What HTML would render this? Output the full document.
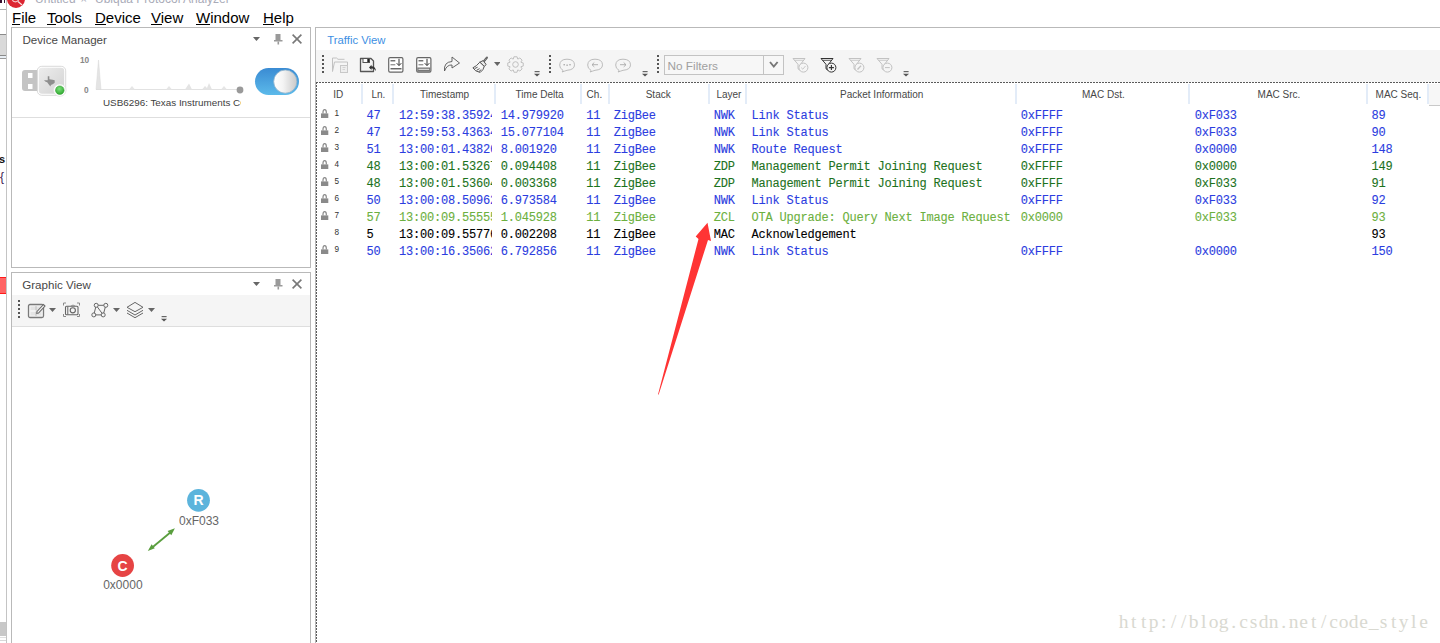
<!DOCTYPE html>
<html><head><meta charset="utf-8"><title>Ubiqua Protocol Analyzer</title>
<style>
html,body{margin:0;padding:0;}
body{width:1440px;height:643px;position:relative;overflow:hidden;background:#fff;font-family:'Liberation Sans',sans-serif;}
.t{position:absolute;line-height:0;white-space:pre;}
.b{position:absolute;}
</style></head><body>
<div class="b" style="left:6px;top:0px;width:1px;height:643px;background:#c4c4c4"></div><div class="b" style="left:0px;top:9px;width:6px;height:1px;background:#b0b0b0"></div><div class="b" style="left:0px;top:0px;width:1.5px;height:3px;background:#3a1030"></div><div class="b" style="left:3.5px;top:0px;width:1.5px;height:3px;background:#3a1030"></div><div class="b" style="left:0px;top:34px;width:6px;height:1px;background:#8a8a8a"></div><div class="b" style="left:0px;top:35px;width:6px;height:20px;background:#d9d9d9"></div><div class="b" style="left:0px;top:55px;width:6px;height:1px;background:#8a8a8a"></div><div class="b" style="left:0px;top:56px;width:6px;height:2px;background:#e8eef4"></div><div class="b" style="left:0px;top:58px;width:6px;height:1px;background:#9a9a9a"></div><div class="t" style="left:-1.00px;top:159.19px;font-family:'Liberation Sans', sans-serif;font-size:11px;color:#111;font-weight:700;">s</div><div class="t" style="left:0.00px;top:176.84px;font-family:'Liberation Sans', sans-serif;font-size:12px;color:#3a2050;font-weight:400;">{</div><div class="b" style="left:0px;top:277px;width:6px;height:17px;background:#ff6464;border-top:1px solid #ff1a1a;border-bottom:1px solid #ff1a1a;box-sizing:border-box"></div><div class="b" style="left:0px;top:622px;width:6px;height:14px;background:#c8c8c8"></div><div class="b" style="left:0px;top:637px;width:6px;height:1px;background:#e0e0e0"></div><div class="b" style="left:0px;top:640px;width:6px;height:1px;background:#d8d8d8"></div><svg class="b" style="left:6px;top:0px;" width="22" height="10" viewBox="0 0 22 10"><circle cx="10" cy="-1" r="9" fill="#dc2430"/><circle cx="9.5" cy="-1.5" r="3.3" fill="none" stroke="#f3c6c8" stroke-width="1.2"/><line x1="12" y1="1.5" x2="16" y2="5" stroke="#f8e0e0" stroke-width="1.3"/></svg><div class="t" style="left:35.00px;top:-1.16px;font-family:'Liberation Sans', sans-serif;font-size:12px;color:#a9abb8;font-weight:400;">Untitled</div><div class="t" style="left:80.50px;top:-0.81px;font-family:'Liberation Sans', sans-serif;font-size:11px;color:#a9abb8;font-weight:400;">×</div><div class="t" style="left:95.00px;top:-1.16px;font-family:'Liberation Sans', sans-serif;font-size:12px;color:#a9abb8;font-weight:400;">Ubiqua Protocol Analyzer</div><div class="t" style="left:12.00px;top:17.50px;font-family:'Liberation Sans', sans-serif;font-size:15px;color:#000;font-weight:400;">File</div><div class="b" style="left:12px;top:24px;width:8px;height:1px;background:#000"></div><div class="t" style="left:47.00px;top:17.50px;font-family:'Liberation Sans', sans-serif;font-size:15px;color:#000;font-weight:400;">Tools</div><div class="b" style="left:47px;top:24px;width:8.5px;height:1px;background:#000"></div><div class="t" style="left:95.00px;top:17.50px;font-family:'Liberation Sans', sans-serif;font-size:15px;color:#000;font-weight:400;">Device</div><div class="b" style="left:95px;top:24px;width:11px;height:1px;background:#000"></div><div class="t" style="left:151.00px;top:17.50px;font-family:'Liberation Sans', sans-serif;font-size:15px;color:#000;font-weight:400;">View</div><div class="b" style="left:151px;top:24px;width:10.5px;height:1px;background:#000"></div><div class="t" style="left:196.00px;top:17.50px;font-family:'Liberation Sans', sans-serif;font-size:15px;color:#000;font-weight:400;">Window</div><div class="b" style="left:196px;top:24px;width:14px;height:1px;background:#000"></div><div class="t" style="left:263.00px;top:17.50px;font-family:'Liberation Sans', sans-serif;font-size:15px;color:#000;font-weight:400;">Help</div><div class="b" style="left:263px;top:24px;width:11px;height:1px;background:#000"></div><div class="b" style="left:11px;top:27px;width:300px;height:241px;border:1px solid #b9b9b9;box-sizing:border-box"></div><div class="t" style="left:22.50px;top:39.98px;font-family:'Liberation Sans', sans-serif;font-size:11.6px;color:#474747;font-weight:400;">Device Manager</div><svg class="b" style="left:250px;top:30px;" width="56" height="18" viewBox="0 0 56 18"><polygon points="3,7 10,7 6.5,11" fill="#666"/><rect x="25.5" y="4" width="5" height="6.5" fill="#9a9a9a"/><rect x="24" y="10" width="8.5" height="1.5" fill="#9a9a9a"/><rect x="27.5" y="11.5" width="1.6" height="3" fill="#9a9a9a"/><path d="M42.6 4.6 L51.4 13.4 M51.4 4.6 L42.6 13.4" stroke="#787878" stroke-width="1.6"/></svg><svg class="b" style="left:20px;top:62px;" width="50" height="38" viewBox="0 0 50 38"><defs><linearGradient id="ub" x1="0" y1="0" x2="1" y2="1"><stop offset="0" stop-color="#ececec"/><stop offset="1" stop-color="#d3d3d3"/></linearGradient><radialGradient id="gd" cx="0.45" cy="0.35" r="0.7"><stop offset="0" stop-color="#7be07b"/><stop offset="1" stop-color="#2aa52a"/></radialGradient></defs><rect x="2" y="8" width="18" height="21" rx="3" fill="#c4c4c4"/><rect x="8" y="11" width="4.5" height="5" fill="#fff"/><rect x="8" y="22" width="4.5" height="5" fill="#fff"/><rect x="17.3" y="4.3" width="28.4" height="29" rx="4.5" fill="#fff" stroke="#d0d0d0" stroke-width="0.8"/><rect x="18.8" y="5.8" width="25.4" height="26" rx="3.3" fill="url(#ub)"/><polygon points="27.75,14.20 29.35,14.20 29.35,17.17 32.56,17.66 34.70,18.16 34.70,20.63 33.09,22.12 30.95,23.11 30.42,24.40 28.82,22.61 27.21,20.14 25.61,19.64 24.00,18.16 27.75,18.16" fill="#8e8e8e"/><circle cx="39.8" cy="28.2" r="6.2" fill="#fff" stroke="#dedede" stroke-width="0.6"/><circle cx="39.8" cy="28.2" r="4.3" fill="url(#gd)" stroke="#2f9a2f" stroke-width="0.5"/></svg><svg class="b" style="left:78px;top:55px;" width="170" height="40" viewBox="0 0 170 40"><line x1="18" y1="34.5" x2="159" y2="34.5" stroke="#e2e2e2" stroke-width="1"/><polygon points="18,34.5 20.5,5 23,34.5" fill="#e4e4e4" stroke="#d8d8d8" stroke-width="0.5"/><polygon points="51,34.5 54,31 57,34.5" fill="#e6e6e6"/><polygon points="88,34.5 91,31 94,34.5" fill="#e6e6e6"/><polygon points="107,34.5 111,28.5 114,34.5" fill="#e4e4e4"/><polygon points="124,34.5 127,31 129,33 131,28 134,34.5" fill="#e4e4e4"/><polygon points="143,34.5 146,31 149,34.5" fill="#e6e6e6"/><circle cx="162" cy="35" r="3.4" fill="#9a9a9a"/></svg><div class="t" style="left:79.90px;top:60.22px;font-family:'Liberation Sans', sans-serif;font-size:8.3px;color:#888;font-weight:700;">10</div><div class="t" style="left:83.90px;top:89.92px;font-family:'Liberation Sans', sans-serif;font-size:8.3px;color:#888;font-weight:700;">0</div><svg class="b" style="left:253px;top:66px;" width="50" height="32" viewBox="0 0 50 32"><defs><linearGradient id="tg" x1="0" y1="0" x2="0" y2="1"><stop offset="0" stop-color="#3a8bd3"/><stop offset="1" stop-color="#5cbaea"/></linearGradient><linearGradient id="kn" x1="0" y1="0" x2="1" y2="0"><stop offset="0" stop-color="#ffffff"/><stop offset="0.4" stop-color="#f4f4f4"/><stop offset="1" stop-color="#c9c9c9"/></linearGradient></defs><rect x="2" y="2" width="44" height="27" rx="13.5" fill="url(#tg)"/><circle cx="32.3" cy="15.6" r="11.6" fill="url(#kn)" stroke="#8fb2cc" stroke-width="0.8"/></svg><div class="b" style="left:103px;top:90px;width:137.5px;height:20px;overflow:hidden"><div class="t" style="left:0.00px;top:12.69px;font-family:'Liberation Sans', sans-serif;font-size:9.85px;color:#404040;font-weight:400;">USB6296: Texas Instruments CC2531</div></div><div class="b" style="left:12px;top:117px;width:298px;height:1px;background:#dedede"></div><div class="b" style="left:11px;top:272px;width:300px;height:380px;border:1px solid #b9b9b9;box-sizing:border-box"></div><div class="t" style="left:22.20px;top:284.78px;font-family:'Liberation Sans', sans-serif;font-size:11.6px;color:#474747;font-weight:400;">Graphic View</div><svg class="b" style="left:250px;top:275px;" width="56" height="18" viewBox="0 0 56 18"><polygon points="3,7 10,7 6.5,11" fill="#666"/><rect x="25.5" y="4" width="5" height="6.5" fill="#9a9a9a"/><rect x="24" y="10" width="8.5" height="1.5" fill="#9a9a9a"/><rect x="27.5" y="11.5" width="1.6" height="3" fill="#9a9a9a"/><path d="M42.6 4.6 L51.4 13.4 M51.4 4.6 L42.6 13.4" stroke="#787878" stroke-width="1.6"/></svg><div class="b" style="left:12px;top:295px;width:298px;height:31px;background:#f5f5f5"></div><div class="b" style="left:12px;top:326px;width:298px;height:1px;background:#dedede"></div><svg class="b" style="left:18px;top:300px;" width="2" height="18" viewBox="0 0 2 18"><rect x="0" y="0" width="2" height="2" fill="#555"/><rect x="0" y="4" width="2" height="2" fill="#555"/><rect x="0" y="8" width="2" height="2" fill="#555"/><rect x="0" y="12" width="2" height="2" fill="#555"/><rect x="0" y="16" width="2" height="2" fill="#555"/></svg><svg class="b" style="left:26px;top:301px;" width="20" height="18" viewBox="0 0 20 18"><rect x="2.5" y="3.5" width="15" height="13" rx="1.5" fill="none" stroke="#7a7a7a" stroke-width="1.3"/><rect x="4.5" y="5.5" width="11" height="9" fill="#e4e4e4"/><line x1="10" y1="5.5" x2="10" y2="14.5" stroke="#8a8a8a" stroke-width="0.8" stroke-dasharray="1,1"/><line x1="4.5" y1="10" x2="10" y2="10" stroke="#fff" stroke-width="1"/><path d="M11 10.5 L17.5 3.5 L19 5 L12.5 12 L10.8 12.4 Z" fill="#f5f5f5" stroke="#6a6a6a" stroke-width="1.1"/></svg><svg class="b" style="left:49.3px;top:308px;" width="7" height="4.6" viewBox="0 0 7 4.6"><polygon points="0,0 7,0 3.5,4.1" fill="#666"/></svg><svg class="b" style="left:62px;top:302px;" width="20" height="16" viewBox="0 0 20 16"><path d="M1.5 3.5 V1 H4 M15 1 H17.5 V3.5 M1.5 12 V14.5 H4 M15 14.5 H17.5 V12" fill="none" stroke="#8a8a8a" stroke-width="1"/><rect x="3.5" y="4.3" width="12.5" height="8.5" rx="1" fill="none" stroke="#666" stroke-width="1.1"/><line x1="5.8" y1="4.5" x2="5.8" y2="12.5" stroke="#666" stroke-width="1"/><path d="M8.5 4.3 Q11 1.8 13.5 4.3" fill="none" stroke="#888" stroke-width="0.9"/><circle cx="10.8" cy="8.3" r="2.6" fill="none" stroke="#666" stroke-width="1.1"/></svg><svg class="b" style="left:90px;top:301px;" width="19" height="18" viewBox="0 0 19 18"><g fill="none" stroke="#666" stroke-width="1"><line x1="6.2" y1="4.3" x2="15.8" y2="4.3"/><line x1="3.8" y1="13.9" x2="13.2" y2="13.9"/><line x1="6.2" y1="4.3" x2="3.8" y2="13.9"/><line x1="15.8" y1="4.3" x2="13.2" y2="13.9"/><line x1="6.2" y1="4.3" x2="13.2" y2="13.9"/><circle cx="6.2" cy="4.3" r="2" fill="#f5f5f5"/><circle cx="15.8" cy="4.3" r="2" fill="#f5f5f5"/><circle cx="3.8" cy="13.9" r="2" fill="#f5f5f5"/><circle cx="13.2" cy="13.9" r="2" fill="#f5f5f5"/></g></svg><svg class="b" style="left:112.8px;top:308px;" width="7" height="4.6" viewBox="0 0 7 4.6"><polygon points="0,0 7,0 3.5,4.1" fill="#666"/></svg><svg class="b" style="left:125px;top:300px;" width="20" height="20" viewBox="0 0 20 20"><g fill="none" stroke="#666" stroke-width="1" stroke-linejoin="round"><path d="M2 13 L10 17.7 L18 13"/><path d="M2 10.3 L10 15 L18 10.3"/><path d="M2 7.3 L10 2.4 L18 7.3 L10 11.7 Z"/></g></svg><svg class="b" style="left:148.1px;top:308px;" width="7" height="4.6" viewBox="0 0 7 4.6"><polygon points="0,0 7,0 3.5,4.1" fill="#666"/></svg><svg class="b" style="left:160.5px;top:315.79999999999995px;" width="7" height="7" viewBox="0 0 7 7"><rect x="0.6" y="0" width="5" height="1.2" fill="#666"/><polygon points="0,2.7 6,2.7 3,5.5" fill="#555"/></svg><svg class="b" style="left:140px;top:520px;" width="45" height="40" viewBox="0 0 45 40"><line x1="11" y1="28.5" x2="31.5" y2="11.5" stroke="#5a9e3e" stroke-width="1.8"/><polygon points="7.8,31 11.6,24.3 14.8,28.2" fill="#5a9e3e"/><polygon points="34.9,8.2 27.6,11.1 31.3,15.2" fill="#5a9e3e"/></svg><svg class="b" style="left:185px;top:487px;" width="28" height="28" viewBox="0 0 28 28"><circle cx="13.5" cy="13.3" r="11.4" fill="#5cb4dc"/><text x="13.5" y="18.3" text-anchor="middle" font-family="Liberation Sans" font-weight="700" font-size="14" fill="#fff">R</text></svg><div class="t" style="left:179.00px;top:520.64px;font-family:'Liberation Sans', sans-serif;font-size:12px;color:#666;font-weight:400;">0xF033</div><svg class="b" style="left:109px;top:552px;" width="28" height="28" viewBox="0 0 28 28"><circle cx="13.6" cy="13.5" r="11.4" fill="#e64444"/><text x="13.6" y="18.6" text-anchor="middle" font-family="Liberation Sans" font-weight="700" font-size="14" fill="#fff">C</text></svg><div class="t" style="left:103.20px;top:585.44px;font-family:'Liberation Sans', sans-serif;font-size:12px;color:#666;font-weight:400;">0x0000</div><div class="b" style="left:315px;top:27px;width:1130px;height:620px;border:1px solid #b9b9b9;box-sizing:border-box"></div><div class="t" style="left:327.30px;top:39.88px;font-family:'Liberation Sans', sans-serif;font-size:11.3px;color:#3d8fe3;font-weight:400;">Traffic View</div><div class="b" style="left:316px;top:50px;width:1124px;height:32px;background:#f5f5f5"></div><svg class="b" style="left:322px;top:55px;" width="2" height="18" viewBox="0 0 2 18"><rect x="0" y="0" width="2" height="2" fill="#555"/><rect x="0" y="4" width="2" height="2" fill="#555"/><rect x="0" y="8" width="2" height="2" fill="#555"/><rect x="0" y="12" width="2" height="2" fill="#555"/><rect x="0" y="16" width="2" height="2" fill="#555"/></svg><svg class="b" style="left:330px;top:56px;" width="20" height="18" viewBox="0 0 20 18"><g fill="none" stroke="#c2c2c2" stroke-width="1"><path d="M2.5 15.5 V2 H6.5 L8 3.3 H14.5"/><path d="M2.5 15.5 L4.5 6 H17.5 V9"/></g><rect x="10.5" y="9.5" width="7" height="7" fill="#eee" stroke="#c8c8c8" stroke-width="1"/><path d="M12.5 11.5 H15.5 M12.5 13.5 H15" stroke="#ccc" stroke-width="0.8"/></svg><svg class="b" style="left:358px;top:56px;" width="20" height="18" viewBox="0 0 20 18"><path d="M2.5 2.5 H13 L15.5 5 V15.5 H2.5 Z" fill="none" stroke="#555" stroke-width="1.3" stroke-linejoin="round"/><rect x="5" y="2.5" width="6.5" height="4" fill="#fff" stroke="#555" stroke-width="1"/><rect x="9.3" y="3" width="1.8" height="3" fill="#222"/><path d="M11 11.5 L13.5 8.8 L13.5 10.2 Q17.5 10.2 18 15 Q16 12.3 13.5 12.6 L13.5 14 Z" fill="#333"/></svg><svg class="b" style="left:386.5px;top:55.5px;" width="18" height="18" viewBox="0 0 18 18"><rect x="1.7" y="1.7" width="14.2" height="14.4" rx="1.3" fill="#fff" stroke="#666" stroke-width="1.2"/><line x1="3.5" y1="4.8" x2="8.3" y2="4.8" stroke="#444" stroke-width="1.1"/><line x1="3.5" y1="8.7" x2="8.3" y2="8.7" stroke="#999" stroke-width="1.4"/><path d="M12 2.8 V9.3 M9.7 7.2 L12 9.6 L14.3 7.2" fill="none" stroke="#333" stroke-width="1"/><line x1="3.5" y1="12.8" x2="14.5" y2="12.8" stroke="#333" stroke-width="1.1"/></svg><svg class="b" style="left:414.5px;top:55.5px;" width="18" height="18" viewBox="0 0 18 18"><rect x="1.7" y="1.7" width="14.2" height="14.4" rx="1.3" fill="#fff" stroke="#666" stroke-width="1.2"/><line x1="3.5" y1="4.8" x2="8.3" y2="4.8" stroke="#444" stroke-width="1.1"/><line x1="3.5" y1="8.7" x2="8.3" y2="8.7" stroke="#999" stroke-width="1.4"/><path d="M12 2.8 V9.3 M9.7 7.2 L12 9.6 L14.3 7.2" fill="none" stroke="#333" stroke-width="1"/><rect x="2.3" y="11.5" width="13" height="4.2" fill="#777"/><line x1="3.5" y1="13.3" x2="14.2" y2="13.3" stroke="#fff" stroke-width="0.9"/></svg><svg class="b" style="left:442px;top:54.2px;" width="20" height="19" viewBox="0 0 20 19"><path d="M2.5 17 Q1.5 8 10 7.5 V3 L17.5 9 L10 14 V11 Q5 10.5 2.5 17 Z" fill="none" stroke="#555" stroke-width="0.9" stroke-linejoin="round"/></svg><svg class="b" style="left:471px;top:55px;" width="18" height="19" viewBox="0 0 18 19"><path d="M15.9 2.6 L12.6 6.6" stroke="#555" stroke-width="2.2" stroke-linecap="round"/><path d="M15.9 2.6 L12.6 6.6" stroke="#ddd" stroke-width="0.7" stroke-dasharray="1,1"/><polygon points="8.8,7.2 12.2,5.6 15.2,9.6 13.2,11.4" fill="#e8e8e8" stroke="#555" stroke-width="1"/><path d="M8.8 7.2 Q5.5 11.3 1.9 12.8 Q4 16.6 9.2 17.4 Q12.6 15 13.2 11.4 Z" fill="#f7f7f7" stroke="#555" stroke-width="1"/><path d="M3.6 13.6 L6.6 12.2 M5.6 15.3 L8.6 13.6 M7.8 16.6 L10.3 14.6" stroke="#444" stroke-width="0.9"/></svg><svg class="b" style="left:493.7px;top:62.4px;" width="6.5" height="4.6" viewBox="0 0 6.5 4.6"><polygon points="0,0 6.5,0 3.25,4.1" fill="#666"/></svg><svg class="b" style="left:506.5px;top:56.3px;" width="17" height="17" viewBox="0 0 17 17"><polygon points="16.24,6.93 16.24,10.07 14.02,10.58 13.87,10.93 15.08,12.86 12.86,15.08 10.93,13.87 10.58,14.02 10.07,16.24 6.93,16.24 6.42,14.02 6.07,13.87 4.14,15.08 1.92,12.86 3.13,10.93 2.98,10.58 0.76,10.07 0.76,6.93 2.98,6.42 3.13,6.07 1.92,4.14 4.14,1.92 6.07,3.13 6.42,2.98 6.93,0.76 10.07,0.76 10.58,2.98 10.93,3.13 12.86,1.92 15.08,4.14 13.87,6.07 14.02,6.42" fill="none" stroke="#c0c0c0" stroke-width="1"/><circle cx="8.5" cy="8.5" r="2.8" fill="none" stroke="#c0c0c0" stroke-width="1"/></svg><svg class="b" style="left:533.6px;top:70.80000000000001px;" width="7" height="7" viewBox="0 0 7 7"><rect x="0.6" y="0" width="5" height="1.2" fill="#666"/><polygon points="0,2.7 6,2.7 3,5.5" fill="#555"/></svg><svg class="b" style="left:549px;top:55px;" width="2" height="18" viewBox="0 0 2 18"><rect x="0" y="0" width="2" height="2" fill="#555"/><rect x="0" y="4" width="2" height="2" fill="#555"/><rect x="0" y="8" width="2" height="2" fill="#555"/><rect x="0" y="12" width="2" height="2" fill="#555"/><rect x="0" y="16" width="2" height="2" fill="#555"/></svg><svg class="b" style="left:558.7px;top:57.5px;" width="17" height="15" viewBox="0 0 17 15"><path d="M4 12.3 Q0.5 10.5 0.7 7 Q1 1.2 8 1.2 Q15.3 1.2 15.5 6.8 Q15.5 11.8 8 12.3 Q6 13 3 14 Q4 13 4 12.3 Z" fill="none" stroke="#b5b5b5" stroke-width="0.9"/><rect x="4.5" y="6" width="1.4" height="1.4" fill="#aaa"/><rect x="7.4" y="6.5" width="1.4" height="1.4" fill="#aaa"/><rect x="10.3" y="6" width="1.4" height="1.4" fill="#aaa"/></svg><svg class="b" style="left:586.6px;top:57.5px;" width="17" height="15" viewBox="0 0 17 15"><path d="M4 12.3 Q0.5 10.5 0.7 7 Q1 1.2 8 1.2 Q15.3 1.2 15.5 6.8 Q15.5 11.8 8 12.3 Q6 13 3 14 Q4 13 4 12.3 Z" fill="none" stroke="#b5b5b5" stroke-width="0.9"/><path d="M5 6.7 H11 M7.3 4.5 L5 6.7 L7.3 8.9" fill="none" stroke="#aaa" stroke-width="0.9"/></svg><svg class="b" style="left:614.5px;top:57.5px;" width="17" height="15" viewBox="0 0 17 15"><path d="M4 12.3 Q0.5 10.5 0.7 7 Q1 1.2 8 1.2 Q15.3 1.2 15.5 6.8 Q15.5 11.8 8 12.3 Q6 13 3 14 Q4 13 4 12.3 Z" fill="none" stroke="#b5b5b5" stroke-width="0.9"/><path d="M5 6.7 H11 M8.7 4.5 L11 6.7 L8.7 8.9" fill="none" stroke="#aaa" stroke-width="0.9"/></svg><svg class="b" style="left:641.9px;top:70.80000000000001px;" width="7" height="7" viewBox="0 0 7 7"><rect x="0.6" y="0" width="5" height="1.2" fill="#666"/><polygon points="0,2.7 6,2.7 3,5.5" fill="#555"/></svg><svg class="b" style="left:657px;top:55px;" width="2" height="18" viewBox="0 0 2 18"><rect x="0" y="0" width="2" height="2" fill="#555"/><rect x="0" y="4" width="2" height="2" fill="#555"/><rect x="0" y="8" width="2" height="2" fill="#555"/><rect x="0" y="12" width="2" height="2" fill="#555"/><rect x="0" y="16" width="2" height="2" fill="#555"/></svg><div class="b" style="left:664px;top:55px;width:120px;height:20px;border:1px solid #c3c3c3;box-sizing:border-box;background:#f7f7f7"></div><div class="b" style="left:763px;top:56px;width:1px;height:18px;background:#c3c3c3"></div><svg class="b" style="left:768px;top:59px;" width="12" height="11" viewBox="0 0 12 11"><path d="M2 3 L5.8 7.5 L9.6 3" fill="none" stroke="#777" stroke-width="1.9"/></svg><div class="t" style="left:667.50px;top:65.91px;font-family:'Liberation Sans', sans-serif;font-size:11.8px;color:#a0a0a0;font-weight:400;">No Filters</div><svg class="b" style="left:792.2px;top:56.8px;" width="17" height="17" viewBox="0 0 17 17"><path d="M1 1.5 H13 L8.5 7.3 V13.5 L6 11.8 V7.3 Z" fill="none" stroke="#c2c2c2" stroke-width="1"/><line x1="2.5" y1="3.3" x2="11.5" y2="3.3" stroke="#c2c2c2" stroke-width="0.8"/><circle cx="11.4" cy="10.6" r="4.5" fill="#f5f5f5" stroke="#c2c2c2" stroke-width="1"/><path d="M9.2 10.6 L10.8 12.2 L13.5 9" fill="none" stroke="#c2c2c2" stroke-width="0.9"/></svg><svg class="b" style="left:820.3px;top:56.8px;" width="17" height="17" viewBox="0 0 17 17"><path d="M1 1.5 H13 L8.5 7.3 V13.5 L6 11.8 V7.3 Z" fill="none" stroke="#333" stroke-width="1"/><line x1="2.5" y1="3.3" x2="11.5" y2="3.3" stroke="#333" stroke-width="0.8"/><circle cx="11.4" cy="10.6" r="4.5" fill="#f5f5f5" stroke="#333" stroke-width="1"/><path d="M8.9 10.6 H13.9 M11.4 8.1 V13.1" stroke="#333" stroke-width="1.1"/></svg><svg class="b" style="left:848.3px;top:56.8px;" width="17" height="17" viewBox="0 0 17 17"><path d="M1 1.5 H13 L8.5 7.3 V13.5 L6 11.8 V7.3 Z" fill="none" stroke="#c2c2c2" stroke-width="1"/><line x1="2.5" y1="3.3" x2="11.5" y2="3.3" stroke="#c2c2c2" stroke-width="0.8"/><circle cx="11.4" cy="10.6" r="4.5" fill="#f5f5f5" stroke="#c2c2c2" stroke-width="1"/><path d="M9.5 12.5 L13 8.8" stroke="#c2c2c2" stroke-width="1.3"/></svg><svg class="b" style="left:876.3px;top:56.8px;" width="17" height="17" viewBox="0 0 17 17"><path d="M1 1.5 H13 L8.5 7.3 V13.5 L6 11.8 V7.3 Z" fill="none" stroke="#c2c2c2" stroke-width="1"/><line x1="2.5" y1="3.3" x2="11.5" y2="3.3" stroke="#c2c2c2" stroke-width="0.8"/><circle cx="11.4" cy="10.6" r="4.5" fill="#f5f5f5" stroke="#c2c2c2" stroke-width="1"/><path d="M9 10.6 H13.8" stroke="#c2c2c2" stroke-width="1"/></svg><svg class="b" style="left:903.2px;top:70.80000000000001px;" width="7" height="7" viewBox="0 0 7 7"><rect x="0.6" y="0" width="5" height="1.2" fill="#666"/><polygon points="0,2.7 6,2.7 3,5.5" fill="#555"/></svg><div class="b" style="left:316px;top:82px;width:1124px;height:1px;background-image:linear-gradient(to right,#5a5a5a 2px,transparent 2px);background-size:3px 1px"></div><div class="b" style="left:316px;top:82px;width:1px;height:570px;background-image:linear-gradient(to bottom,#5a5a5a 2px,transparent 2px);background-size:1px 3px"></div><div class="b" style="left:360.5px;top:84px;width:2px;height:20px;background:#e3ecf8"></div><div class="b" style="left:392.3px;top:84px;width:2px;height:20px;background:#e3ecf8"></div><div class="b" style="left:494.3px;top:84px;width:2px;height:20px;background:#e3ecf8"></div><div class="b" style="left:579.5px;top:84px;width:2px;height:20px;background:#e3ecf8"></div><div class="b" style="left:607.6px;top:84px;width:2px;height:20px;background:#e3ecf8"></div><div class="b" style="left:707.8px;top:84px;width:2px;height:20px;background:#e3ecf8"></div><div class="b" style="left:745.3px;top:84px;width:2px;height:20px;background:#e3ecf8"></div><div class="b" style="left:1014.5px;top:84px;width:2px;height:20px;background:#e3ecf8"></div><div class="b" style="left:1188.3px;top:84px;width:2px;height:20px;background:#e3ecf8"></div><div class="b" style="left:1365.5px;top:84px;width:2px;height:20px;background:#e3ecf8"></div><div class="b" style="left:1427.3px;top:84px;width:2px;height:20px;background:#e3ecf8"></div><div class="b" style="left:1429px;top:84px;width:11px;height:21px;background:#f7f7f7"></div><div class="b" style="left:1429px;top:105px;width:11px;height:1px;background:#c9c9c9"></div><div class="t" style="left:333.20px;top:94.73px;font-family:'Liberation Sans', sans-serif;font-size:10px;color:#474747;font-weight:400;">ID</div><div class="t" style="left:371.50px;top:94.73px;font-family:'Liberation Sans', sans-serif;font-size:10px;color:#474747;font-weight:400;">Ln.</div><div class="t" style="left:420.00px;top:94.73px;font-family:'Liberation Sans', sans-serif;font-size:10px;color:#474747;font-weight:400;">Timestamp</div><div class="t" style="left:515.60px;top:94.73px;font-family:'Liberation Sans', sans-serif;font-size:10px;color:#474747;font-weight:400;">Time Delta</div><div class="t" style="left:586.60px;top:94.73px;font-family:'Liberation Sans', sans-serif;font-size:10px;color:#474747;font-weight:400;">Ch.</div><div class="t" style="left:645.70px;top:94.73px;font-family:'Liberation Sans', sans-serif;font-size:10px;color:#474747;font-weight:400;">Stack</div><div class="t" style="left:716.40px;top:94.73px;font-family:'Liberation Sans', sans-serif;font-size:10px;color:#474747;font-weight:400;">Layer</div><div class="t" style="left:840.00px;top:94.73px;font-family:'Liberation Sans', sans-serif;font-size:10px;color:#474747;font-weight:400;">Packet Information</div><div class="t" style="left:1082.00px;top:94.73px;font-family:'Liberation Sans', sans-serif;font-size:10px;color:#474747;font-weight:400;">MAC Dst.</div><div class="t" style="left:1257.60px;top:94.73px;font-family:'Liberation Sans', sans-serif;font-size:10px;color:#474747;font-weight:400;">MAC Src.</div><div class="t" style="left:1375.60px;top:94.73px;font-family:'Liberation Sans', sans-serif;font-size:10px;color:#474747;font-weight:400;">MAC Seq.</div><svg class="b" style="left:320px;top:109px;" width="10" height="10" viewBox="0 0 10 10"><path d="M3 4.6 V3.2 Q3 0.7 4.65 0.7 Q6.3 0.7 6.3 3.2 V4.6" fill="none" stroke="#8a8a8a" stroke-width="1.2"/><rect x="1" y="4.4" width="7.3" height="4.6" fill="#8a8a8a"/></svg><div class="t" style="left:334.60px;top:113.96px;font-family:'Liberation Sans', sans-serif;font-size:8.2px;color:#333;font-weight:400;">1</div><div class="t" style="left:366.50px;top:115.81px;font-family:'Liberation Mono', monospace;font-size:12.0px;color:#2b3de0;font-weight:400;letter-spacing:-0.2px;-webkit-text-stroke:0.1px currentColor;">47</div><div class="b" style="left:398px;top:105px;width:94px;height:18px;overflow:hidden"><div class="t" style="left:1.00px;top:10.81px;font-family:'Liberation Mono', monospace;font-size:12.0px;color:#2b3de0;font-weight:400;letter-spacing:-0.2px;-webkit-text-stroke:0.1px currentColor;">12:59:38.359244</div></div><div class="t" style="left:500.80px;top:115.81px;font-family:'Liberation Mono', monospace;font-size:12.0px;color:#2b3de0;font-weight:400;letter-spacing:-0.2px;-webkit-text-stroke:0.1px currentColor;">14.979920</div><div class="t" style="left:586.30px;top:115.81px;font-family:'Liberation Mono', monospace;font-size:12.0px;color:#2b3de0;font-weight:400;letter-spacing:-0.2px;-webkit-text-stroke:0.1px currentColor;">11</div><div class="t" style="left:613.80px;top:115.81px;font-family:'Liberation Mono', monospace;font-size:12.0px;color:#2b3de0;font-weight:400;letter-spacing:-0.2px;-webkit-text-stroke:0.1px currentColor;">ZigBee</div><div class="t" style="left:713.80px;top:115.81px;font-family:'Liberation Mono', monospace;font-size:12.0px;color:#2b3de0;font-weight:400;letter-spacing:-0.2px;-webkit-text-stroke:0.1px currentColor;">NWK</div><div class="t" style="left:751.50px;top:115.81px;font-family:'Liberation Mono', monospace;font-size:12.0px;color:#2b3de0;font-weight:400;letter-spacing:-0.2px;-webkit-text-stroke:0.1px currentColor;">Link Status</div><div class="t" style="left:1020.80px;top:115.81px;font-family:'Liberation Mono', monospace;font-size:12.0px;color:#2b3de0;font-weight:400;letter-spacing:-0.2px;-webkit-text-stroke:0.1px currentColor;">0xFFFF</div><div class="t" style="left:1194.80px;top:115.81px;font-family:'Liberation Mono', monospace;font-size:12.0px;color:#2b3de0;font-weight:400;letter-spacing:-0.2px;-webkit-text-stroke:0.1px currentColor;">0xF033</div><div class="t" style="left:1371.50px;top:115.81px;font-family:'Liberation Mono', monospace;font-size:12.0px;color:#2b3de0;font-weight:400;letter-spacing:-0.2px;-webkit-text-stroke:0.1px currentColor;">89</div><svg class="b" style="left:320px;top:126px;" width="10" height="10" viewBox="0 0 10 10"><path d="M3 4.6 V3.2 Q3 0.7 4.65 0.7 Q6.3 0.7 6.3 3.2 V4.6" fill="none" stroke="#8a8a8a" stroke-width="1.2"/><rect x="1" y="4.4" width="7.3" height="4.6" fill="#8a8a8a"/></svg><div class="t" style="left:334.60px;top:130.96px;font-family:'Liberation Sans', sans-serif;font-size:8.2px;color:#333;font-weight:400;">2</div><div class="t" style="left:366.50px;top:132.81px;font-family:'Liberation Mono', monospace;font-size:12.0px;color:#2b3de0;font-weight:400;letter-spacing:-0.2px;-webkit-text-stroke:0.1px currentColor;">47</div><div class="b" style="left:398px;top:122px;width:94px;height:18px;overflow:hidden"><div class="t" style="left:1.00px;top:10.81px;font-family:'Liberation Mono', monospace;font-size:12.0px;color:#2b3de0;font-weight:400;letter-spacing:-0.2px;-webkit-text-stroke:0.1px currentColor;">12:59:53.436348</div></div><div class="t" style="left:500.80px;top:132.81px;font-family:'Liberation Mono', monospace;font-size:12.0px;color:#2b3de0;font-weight:400;letter-spacing:-0.2px;-webkit-text-stroke:0.1px currentColor;">15.077104</div><div class="t" style="left:586.30px;top:132.81px;font-family:'Liberation Mono', monospace;font-size:12.0px;color:#2b3de0;font-weight:400;letter-spacing:-0.2px;-webkit-text-stroke:0.1px currentColor;">11</div><div class="t" style="left:613.80px;top:132.81px;font-family:'Liberation Mono', monospace;font-size:12.0px;color:#2b3de0;font-weight:400;letter-spacing:-0.2px;-webkit-text-stroke:0.1px currentColor;">ZigBee</div><div class="t" style="left:713.80px;top:132.81px;font-family:'Liberation Mono', monospace;font-size:12.0px;color:#2b3de0;font-weight:400;letter-spacing:-0.2px;-webkit-text-stroke:0.1px currentColor;">NWK</div><div class="t" style="left:751.50px;top:132.81px;font-family:'Liberation Mono', monospace;font-size:12.0px;color:#2b3de0;font-weight:400;letter-spacing:-0.2px;-webkit-text-stroke:0.1px currentColor;">Link Status</div><div class="t" style="left:1020.80px;top:132.81px;font-family:'Liberation Mono', monospace;font-size:12.0px;color:#2b3de0;font-weight:400;letter-spacing:-0.2px;-webkit-text-stroke:0.1px currentColor;">0xFFFF</div><div class="t" style="left:1194.80px;top:132.81px;font-family:'Liberation Mono', monospace;font-size:12.0px;color:#2b3de0;font-weight:400;letter-spacing:-0.2px;-webkit-text-stroke:0.1px currentColor;">0xF033</div><div class="t" style="left:1371.50px;top:132.81px;font-family:'Liberation Mono', monospace;font-size:12.0px;color:#2b3de0;font-weight:400;letter-spacing:-0.2px;-webkit-text-stroke:0.1px currentColor;">90</div><svg class="b" style="left:320px;top:143px;" width="10" height="10" viewBox="0 0 10 10"><path d="M3 4.6 V3.2 Q3 0.7 4.65 0.7 Q6.3 0.7 6.3 3.2 V4.6" fill="none" stroke="#8a8a8a" stroke-width="1.2"/><rect x="1" y="4.4" width="7.3" height="4.6" fill="#8a8a8a"/></svg><div class="t" style="left:334.60px;top:147.96px;font-family:'Liberation Sans', sans-serif;font-size:8.2px;color:#333;font-weight:400;">3</div><div class="t" style="left:366.50px;top:149.81px;font-family:'Liberation Mono', monospace;font-size:12.0px;color:#2b3de0;font-weight:400;letter-spacing:-0.2px;-webkit-text-stroke:0.1px currentColor;">51</div><div class="b" style="left:398px;top:139px;width:94px;height:18px;overflow:hidden"><div class="t" style="left:1.00px;top:10.81px;font-family:'Liberation Mono', monospace;font-size:12.0px;color:#2b3de0;font-weight:400;letter-spacing:-0.2px;-webkit-text-stroke:0.1px currentColor;">13:00:01.438268</div></div><div class="t" style="left:500.80px;top:149.81px;font-family:'Liberation Mono', monospace;font-size:12.0px;color:#2b3de0;font-weight:400;letter-spacing:-0.2px;-webkit-text-stroke:0.1px currentColor;">8.001920</div><div class="t" style="left:586.30px;top:149.81px;font-family:'Liberation Mono', monospace;font-size:12.0px;color:#2b3de0;font-weight:400;letter-spacing:-0.2px;-webkit-text-stroke:0.1px currentColor;">11</div><div class="t" style="left:613.80px;top:149.81px;font-family:'Liberation Mono', monospace;font-size:12.0px;color:#2b3de0;font-weight:400;letter-spacing:-0.2px;-webkit-text-stroke:0.1px currentColor;">ZigBee</div><div class="t" style="left:713.80px;top:149.81px;font-family:'Liberation Mono', monospace;font-size:12.0px;color:#2b3de0;font-weight:400;letter-spacing:-0.2px;-webkit-text-stroke:0.1px currentColor;">NWK</div><div class="t" style="left:751.50px;top:149.81px;font-family:'Liberation Mono', monospace;font-size:12.0px;color:#2b3de0;font-weight:400;letter-spacing:-0.2px;-webkit-text-stroke:0.1px currentColor;">Route Request</div><div class="t" style="left:1020.80px;top:149.81px;font-family:'Liberation Mono', monospace;font-size:12.0px;color:#2b3de0;font-weight:400;letter-spacing:-0.2px;-webkit-text-stroke:0.1px currentColor;">0xFFFF</div><div class="t" style="left:1194.80px;top:149.81px;font-family:'Liberation Mono', monospace;font-size:12.0px;color:#2b3de0;font-weight:400;letter-spacing:-0.2px;-webkit-text-stroke:0.1px currentColor;">0x0000</div><div class="t" style="left:1371.50px;top:149.81px;font-family:'Liberation Mono', monospace;font-size:12.0px;color:#2b3de0;font-weight:400;letter-spacing:-0.2px;-webkit-text-stroke:0.1px currentColor;">148</div><svg class="b" style="left:320px;top:160px;" width="10" height="10" viewBox="0 0 10 10"><path d="M3 4.6 V3.2 Q3 0.7 4.65 0.7 Q6.3 0.7 6.3 3.2 V4.6" fill="none" stroke="#8a8a8a" stroke-width="1.2"/><rect x="1" y="4.4" width="7.3" height="4.6" fill="#8a8a8a"/></svg><div class="t" style="left:334.60px;top:164.96px;font-family:'Liberation Sans', sans-serif;font-size:8.2px;color:#333;font-weight:400;">4</div><div class="t" style="left:366.50px;top:166.81px;font-family:'Liberation Mono', monospace;font-size:12.0px;color:#1c721c;font-weight:400;letter-spacing:-0.2px;-webkit-text-stroke:0.1px currentColor;">48</div><div class="b" style="left:398px;top:156px;width:94px;height:18px;overflow:hidden"><div class="t" style="left:1.00px;top:10.81px;font-family:'Liberation Mono', monospace;font-size:12.0px;color:#1c721c;font-weight:400;letter-spacing:-0.2px;-webkit-text-stroke:0.1px currentColor;">13:00:01.532676</div></div><div class="t" style="left:500.80px;top:166.81px;font-family:'Liberation Mono', monospace;font-size:12.0px;color:#1c721c;font-weight:400;letter-spacing:-0.2px;-webkit-text-stroke:0.1px currentColor;">0.094408</div><div class="t" style="left:586.30px;top:166.81px;font-family:'Liberation Mono', monospace;font-size:12.0px;color:#1c721c;font-weight:400;letter-spacing:-0.2px;-webkit-text-stroke:0.1px currentColor;">11</div><div class="t" style="left:613.80px;top:166.81px;font-family:'Liberation Mono', monospace;font-size:12.0px;color:#1c721c;font-weight:400;letter-spacing:-0.2px;-webkit-text-stroke:0.1px currentColor;">ZigBee</div><div class="t" style="left:713.80px;top:166.81px;font-family:'Liberation Mono', monospace;font-size:12.0px;color:#1c721c;font-weight:400;letter-spacing:-0.2px;-webkit-text-stroke:0.1px currentColor;">ZDP</div><div class="t" style="left:751.50px;top:166.81px;font-family:'Liberation Mono', monospace;font-size:12.0px;color:#1c721c;font-weight:400;letter-spacing:-0.2px;-webkit-text-stroke:0.1px currentColor;">Management Permit Joining Request</div><div class="t" style="left:1020.80px;top:166.81px;font-family:'Liberation Mono', monospace;font-size:12.0px;color:#1c721c;font-weight:400;letter-spacing:-0.2px;-webkit-text-stroke:0.1px currentColor;">0xFFFF</div><div class="t" style="left:1194.80px;top:166.81px;font-family:'Liberation Mono', monospace;font-size:12.0px;color:#1c721c;font-weight:400;letter-spacing:-0.2px;-webkit-text-stroke:0.1px currentColor;">0x0000</div><div class="t" style="left:1371.50px;top:166.81px;font-family:'Liberation Mono', monospace;font-size:12.0px;color:#1c721c;font-weight:400;letter-spacing:-0.2px;-webkit-text-stroke:0.1px currentColor;">149</div><svg class="b" style="left:320px;top:177px;" width="10" height="10" viewBox="0 0 10 10"><path d="M3 4.6 V3.2 Q3 0.7 4.65 0.7 Q6.3 0.7 6.3 3.2 V4.6" fill="none" stroke="#8a8a8a" stroke-width="1.2"/><rect x="1" y="4.4" width="7.3" height="4.6" fill="#8a8a8a"/></svg><div class="t" style="left:334.60px;top:181.96px;font-family:'Liberation Sans', sans-serif;font-size:8.2px;color:#333;font-weight:400;">5</div><div class="t" style="left:366.50px;top:183.81px;font-family:'Liberation Mono', monospace;font-size:12.0px;color:#1c721c;font-weight:400;letter-spacing:-0.2px;-webkit-text-stroke:0.1px currentColor;">48</div><div class="b" style="left:398px;top:173px;width:94px;height:18px;overflow:hidden"><div class="t" style="left:1.00px;top:10.81px;font-family:'Liberation Mono', monospace;font-size:12.0px;color:#1c721c;font-weight:400;letter-spacing:-0.2px;-webkit-text-stroke:0.1px currentColor;">13:00:01.536044</div></div><div class="t" style="left:500.80px;top:183.81px;font-family:'Liberation Mono', monospace;font-size:12.0px;color:#1c721c;font-weight:400;letter-spacing:-0.2px;-webkit-text-stroke:0.1px currentColor;">0.003368</div><div class="t" style="left:586.30px;top:183.81px;font-family:'Liberation Mono', monospace;font-size:12.0px;color:#1c721c;font-weight:400;letter-spacing:-0.2px;-webkit-text-stroke:0.1px currentColor;">11</div><div class="t" style="left:613.80px;top:183.81px;font-family:'Liberation Mono', monospace;font-size:12.0px;color:#1c721c;font-weight:400;letter-spacing:-0.2px;-webkit-text-stroke:0.1px currentColor;">ZigBee</div><div class="t" style="left:713.80px;top:183.81px;font-family:'Liberation Mono', monospace;font-size:12.0px;color:#1c721c;font-weight:400;letter-spacing:-0.2px;-webkit-text-stroke:0.1px currentColor;">ZDP</div><div class="t" style="left:751.50px;top:183.81px;font-family:'Liberation Mono', monospace;font-size:12.0px;color:#1c721c;font-weight:400;letter-spacing:-0.2px;-webkit-text-stroke:0.1px currentColor;">Management Permit Joining Request</div><div class="t" style="left:1020.80px;top:183.81px;font-family:'Liberation Mono', monospace;font-size:12.0px;color:#1c721c;font-weight:400;letter-spacing:-0.2px;-webkit-text-stroke:0.1px currentColor;">0xFFFF</div><div class="t" style="left:1194.80px;top:183.81px;font-family:'Liberation Mono', monospace;font-size:12.0px;color:#1c721c;font-weight:400;letter-spacing:-0.2px;-webkit-text-stroke:0.1px currentColor;">0xF033</div><div class="t" style="left:1371.50px;top:183.81px;font-family:'Liberation Mono', monospace;font-size:12.0px;color:#1c721c;font-weight:400;letter-spacing:-0.2px;-webkit-text-stroke:0.1px currentColor;">91</div><svg class="b" style="left:320px;top:194px;" width="10" height="10" viewBox="0 0 10 10"><path d="M3 4.6 V3.2 Q3 0.7 4.65 0.7 Q6.3 0.7 6.3 3.2 V4.6" fill="none" stroke="#8a8a8a" stroke-width="1.2"/><rect x="1" y="4.4" width="7.3" height="4.6" fill="#8a8a8a"/></svg><div class="t" style="left:334.60px;top:198.96px;font-family:'Liberation Sans', sans-serif;font-size:8.2px;color:#333;font-weight:400;">6</div><div class="t" style="left:366.50px;top:200.81px;font-family:'Liberation Mono', monospace;font-size:12.0px;color:#2b3de0;font-weight:400;letter-spacing:-0.2px;-webkit-text-stroke:0.1px currentColor;">50</div><div class="b" style="left:398px;top:190px;width:94px;height:18px;overflow:hidden"><div class="t" style="left:1.00px;top:10.81px;font-family:'Liberation Mono', monospace;font-size:12.0px;color:#2b3de0;font-weight:400;letter-spacing:-0.2px;-webkit-text-stroke:0.1px currentColor;">13:00:08.509628</div></div><div class="t" style="left:500.80px;top:200.81px;font-family:'Liberation Mono', monospace;font-size:12.0px;color:#2b3de0;font-weight:400;letter-spacing:-0.2px;-webkit-text-stroke:0.1px currentColor;">6.973584</div><div class="t" style="left:586.30px;top:200.81px;font-family:'Liberation Mono', monospace;font-size:12.0px;color:#2b3de0;font-weight:400;letter-spacing:-0.2px;-webkit-text-stroke:0.1px currentColor;">11</div><div class="t" style="left:613.80px;top:200.81px;font-family:'Liberation Mono', monospace;font-size:12.0px;color:#2b3de0;font-weight:400;letter-spacing:-0.2px;-webkit-text-stroke:0.1px currentColor;">ZigBee</div><div class="t" style="left:713.80px;top:200.81px;font-family:'Liberation Mono', monospace;font-size:12.0px;color:#2b3de0;font-weight:400;letter-spacing:-0.2px;-webkit-text-stroke:0.1px currentColor;">NWK</div><div class="t" style="left:751.50px;top:200.81px;font-family:'Liberation Mono', monospace;font-size:12.0px;color:#2b3de0;font-weight:400;letter-spacing:-0.2px;-webkit-text-stroke:0.1px currentColor;">Link Status</div><div class="t" style="left:1020.80px;top:200.81px;font-family:'Liberation Mono', monospace;font-size:12.0px;color:#2b3de0;font-weight:400;letter-spacing:-0.2px;-webkit-text-stroke:0.1px currentColor;">0xFFFF</div><div class="t" style="left:1194.80px;top:200.81px;font-family:'Liberation Mono', monospace;font-size:12.0px;color:#2b3de0;font-weight:400;letter-spacing:-0.2px;-webkit-text-stroke:0.1px currentColor;">0xF033</div><div class="t" style="left:1371.50px;top:200.81px;font-family:'Liberation Mono', monospace;font-size:12.0px;color:#2b3de0;font-weight:400;letter-spacing:-0.2px;-webkit-text-stroke:0.1px currentColor;">92</div><svg class="b" style="left:320px;top:211px;" width="10" height="10" viewBox="0 0 10 10"><path d="M3 4.6 V3.2 Q3 0.7 4.65 0.7 Q6.3 0.7 6.3 3.2 V4.6" fill="none" stroke="#8a8a8a" stroke-width="1.2"/><rect x="1" y="4.4" width="7.3" height="4.6" fill="#8a8a8a"/></svg><div class="t" style="left:334.60px;top:215.96px;font-family:'Liberation Sans', sans-serif;font-size:8.2px;color:#333;font-weight:400;">7</div><div class="t" style="left:366.50px;top:217.81px;font-family:'Liberation Mono', monospace;font-size:12.0px;color:#6cb040;font-weight:400;letter-spacing:-0.2px;-webkit-text-stroke:0.1px currentColor;">57</div><div class="b" style="left:398px;top:207px;width:94px;height:18px;overflow:hidden"><div class="t" style="left:1.00px;top:10.81px;font-family:'Liberation Mono', monospace;font-size:12.0px;color:#6cb040;font-weight:400;letter-spacing:-0.2px;-webkit-text-stroke:0.1px currentColor;">13:00:09.555556</div></div><div class="t" style="left:500.80px;top:217.81px;font-family:'Liberation Mono', monospace;font-size:12.0px;color:#6cb040;font-weight:400;letter-spacing:-0.2px;-webkit-text-stroke:0.1px currentColor;">1.045928</div><div class="t" style="left:586.30px;top:217.81px;font-family:'Liberation Mono', monospace;font-size:12.0px;color:#6cb040;font-weight:400;letter-spacing:-0.2px;-webkit-text-stroke:0.1px currentColor;">11</div><div class="t" style="left:613.80px;top:217.81px;font-family:'Liberation Mono', monospace;font-size:12.0px;color:#6cb040;font-weight:400;letter-spacing:-0.2px;-webkit-text-stroke:0.1px currentColor;">ZigBee</div><div class="t" style="left:713.80px;top:217.81px;font-family:'Liberation Mono', monospace;font-size:12.0px;color:#6cb040;font-weight:400;letter-spacing:-0.2px;-webkit-text-stroke:0.1px currentColor;">ZCL</div><div class="t" style="left:751.50px;top:217.81px;font-family:'Liberation Mono', monospace;font-size:12.0px;color:#6cb040;font-weight:400;letter-spacing:-0.2px;-webkit-text-stroke:0.1px currentColor;">OTA Upgrade: Query Next Image Request</div><div class="t" style="left:1020.80px;top:217.81px;font-family:'Liberation Mono', monospace;font-size:12.0px;color:#6cb040;font-weight:400;letter-spacing:-0.2px;-webkit-text-stroke:0.1px currentColor;">0x0000</div><div class="t" style="left:1194.80px;top:217.81px;font-family:'Liberation Mono', monospace;font-size:12.0px;color:#6cb040;font-weight:400;letter-spacing:-0.2px;-webkit-text-stroke:0.1px currentColor;">0xF033</div><div class="t" style="left:1371.50px;top:217.81px;font-family:'Liberation Mono', monospace;font-size:12.0px;color:#6cb040;font-weight:400;letter-spacing:-0.2px;-webkit-text-stroke:0.1px currentColor;">93</div><div class="t" style="left:334.60px;top:232.96px;font-family:'Liberation Sans', sans-serif;font-size:8.2px;color:#333;font-weight:400;">8</div><div class="t" style="left:366.50px;top:234.81px;font-family:'Liberation Mono', monospace;font-size:12.0px;color:#000;font-weight:400;letter-spacing:-0.2px;-webkit-text-stroke:0.1px currentColor;">5</div><div class="b" style="left:398px;top:224px;width:94px;height:18px;overflow:hidden"><div class="t" style="left:1.00px;top:10.81px;font-family:'Liberation Mono', monospace;font-size:12.0px;color:#000;font-weight:400;letter-spacing:-0.2px;-webkit-text-stroke:0.1px currentColor;">13:00:09.557764</div></div><div class="t" style="left:500.80px;top:234.81px;font-family:'Liberation Mono', monospace;font-size:12.0px;color:#000;font-weight:400;letter-spacing:-0.2px;-webkit-text-stroke:0.1px currentColor;">0.002208</div><div class="t" style="left:586.30px;top:234.81px;font-family:'Liberation Mono', monospace;font-size:12.0px;color:#000;font-weight:400;letter-spacing:-0.2px;-webkit-text-stroke:0.1px currentColor;">11</div><div class="t" style="left:613.80px;top:234.81px;font-family:'Liberation Mono', monospace;font-size:12.0px;color:#000;font-weight:400;letter-spacing:-0.2px;-webkit-text-stroke:0.1px currentColor;">ZigBee</div><div class="t" style="left:713.80px;top:234.81px;font-family:'Liberation Mono', monospace;font-size:12.0px;color:#000;font-weight:400;letter-spacing:-0.2px;-webkit-text-stroke:0.1px currentColor;">MAC</div><div class="t" style="left:751.50px;top:234.81px;font-family:'Liberation Mono', monospace;font-size:12.0px;color:#000;font-weight:400;letter-spacing:-0.2px;-webkit-text-stroke:0.1px currentColor;">Acknowledgement</div><div class="t" style="left:1371.50px;top:234.81px;font-family:'Liberation Mono', monospace;font-size:12.0px;color:#000;font-weight:400;letter-spacing:-0.2px;-webkit-text-stroke:0.1px currentColor;">93</div><svg class="b" style="left:320px;top:245px;" width="10" height="10" viewBox="0 0 10 10"><path d="M3 4.6 V3.2 Q3 0.7 4.65 0.7 Q6.3 0.7 6.3 3.2 V4.6" fill="none" stroke="#8a8a8a" stroke-width="1.2"/><rect x="1" y="4.4" width="7.3" height="4.6" fill="#8a8a8a"/></svg><div class="t" style="left:334.60px;top:249.96px;font-family:'Liberation Sans', sans-serif;font-size:8.2px;color:#333;font-weight:400;">9</div><div class="t" style="left:366.50px;top:251.81px;font-family:'Liberation Mono', monospace;font-size:12.0px;color:#2b3de0;font-weight:400;letter-spacing:-0.2px;-webkit-text-stroke:0.1px currentColor;">50</div><div class="b" style="left:398px;top:241px;width:94px;height:18px;overflow:hidden"><div class="t" style="left:1.00px;top:10.81px;font-family:'Liberation Mono', monospace;font-size:12.0px;color:#2b3de0;font-weight:400;letter-spacing:-0.2px;-webkit-text-stroke:0.1px currentColor;">13:00:16.350620</div></div><div class="t" style="left:500.80px;top:251.81px;font-family:'Liberation Mono', monospace;font-size:12.0px;color:#2b3de0;font-weight:400;letter-spacing:-0.2px;-webkit-text-stroke:0.1px currentColor;">6.792856</div><div class="t" style="left:586.30px;top:251.81px;font-family:'Liberation Mono', monospace;font-size:12.0px;color:#2b3de0;font-weight:400;letter-spacing:-0.2px;-webkit-text-stroke:0.1px currentColor;">11</div><div class="t" style="left:613.80px;top:251.81px;font-family:'Liberation Mono', monospace;font-size:12.0px;color:#2b3de0;font-weight:400;letter-spacing:-0.2px;-webkit-text-stroke:0.1px currentColor;">ZigBee</div><div class="t" style="left:713.80px;top:251.81px;font-family:'Liberation Mono', monospace;font-size:12.0px;color:#2b3de0;font-weight:400;letter-spacing:-0.2px;-webkit-text-stroke:0.1px currentColor;">NWK</div><div class="t" style="left:751.50px;top:251.81px;font-family:'Liberation Mono', monospace;font-size:12.0px;color:#2b3de0;font-weight:400;letter-spacing:-0.2px;-webkit-text-stroke:0.1px currentColor;">Link Status</div><div class="t" style="left:1020.80px;top:251.81px;font-family:'Liberation Mono', monospace;font-size:12.0px;color:#2b3de0;font-weight:400;letter-spacing:-0.2px;-webkit-text-stroke:0.1px currentColor;">0xFFFF</div><div class="t" style="left:1194.80px;top:251.81px;font-family:'Liberation Mono', monospace;font-size:12.0px;color:#2b3de0;font-weight:400;letter-spacing:-0.2px;-webkit-text-stroke:0.1px currentColor;">0x0000</div><div class="t" style="left:1371.50px;top:251.81px;font-family:'Liberation Mono', monospace;font-size:12.0px;color:#2b3de0;font-weight:400;letter-spacing:-0.2px;-webkit-text-stroke:0.1px currentColor;">150</div><svg class="b" style="left:640px;top:210px;" width="80" height="200" viewBox="0 0 80 200"><polygon points="18,184.5 58.5,29 55.7,26.6 67.5,12.8 71,31 68,30 18.7,184.5" fill="#ff3434"/></svg><div class="t" style="left:1118.6px;top:621.97px;width:10px;text-align:center;font-family:'Liberation Serif', serif;font-size:19.5px;color:#d9d9d1">h</div><div class="t" style="left:1128.6px;top:621.97px;width:10px;text-align:center;font-family:'Liberation Serif', serif;font-size:19.5px;color:#d9d9d1">t</div><div class="t" style="left:1138.6px;top:621.97px;width:10px;text-align:center;font-family:'Liberation Serif', serif;font-size:19.5px;color:#d9d9d1">t</div><div class="t" style="left:1148.6px;top:621.97px;width:10px;text-align:center;font-family:'Liberation Serif', serif;font-size:19.5px;color:#d9d9d1">p</div><div class="t" style="left:1158.6px;top:621.97px;width:10px;text-align:center;font-family:'Liberation Serif', serif;font-size:19.5px;color:#d9d9d1">:</div><div class="t" style="left:1168.6px;top:621.97px;width:10px;text-align:center;font-family:'Liberation Serif', serif;font-size:19.5px;color:#d9d9d1">/</div><div class="t" style="left:1178.6px;top:621.97px;width:10px;text-align:center;font-family:'Liberation Serif', serif;font-size:19.5px;color:#d9d9d1">/</div><div class="t" style="left:1188.6px;top:621.97px;width:10px;text-align:center;font-family:'Liberation Serif', serif;font-size:19.5px;color:#d9d9d1">b</div><div class="t" style="left:1198.6px;top:621.97px;width:10px;text-align:center;font-family:'Liberation Serif', serif;font-size:19.5px;color:#d9d9d1">l</div><div class="t" style="left:1208.6px;top:621.97px;width:10px;text-align:center;font-family:'Liberation Serif', serif;font-size:19.5px;color:#d9d9d1">o</div><div class="t" style="left:1218.6px;top:621.97px;width:10px;text-align:center;font-family:'Liberation Serif', serif;font-size:19.5px;color:#d9d9d1">g</div><div class="t" style="left:1228.6px;top:621.97px;width:10px;text-align:center;font-family:'Liberation Serif', serif;font-size:19.5px;color:#d9d9d1">.</div><div class="t" style="left:1238.6px;top:621.97px;width:10px;text-align:center;font-family:'Liberation Serif', serif;font-size:19.5px;color:#d9d9d1">c</div><div class="t" style="left:1248.6px;top:621.97px;width:10px;text-align:center;font-family:'Liberation Serif', serif;font-size:19.5px;color:#d9d9d1">s</div><div class="t" style="left:1258.6px;top:621.97px;width:10px;text-align:center;font-family:'Liberation Serif', serif;font-size:19.5px;color:#d9d9d1">d</div><div class="t" style="left:1268.6px;top:621.97px;width:10px;text-align:center;font-family:'Liberation Serif', serif;font-size:19.5px;color:#d9d9d1">n</div><div class="t" style="left:1278.6px;top:621.97px;width:10px;text-align:center;font-family:'Liberation Serif', serif;font-size:19.5px;color:#d9d9d1">.</div><div class="t" style="left:1288.6px;top:621.97px;width:10px;text-align:center;font-family:'Liberation Serif', serif;font-size:19.5px;color:#d9d9d1">n</div><div class="t" style="left:1298.6px;top:621.97px;width:10px;text-align:center;font-family:'Liberation Serif', serif;font-size:19.5px;color:#d9d9d1">e</div><div class="t" style="left:1308.6px;top:621.97px;width:10px;text-align:center;font-family:'Liberation Serif', serif;font-size:19.5px;color:#d9d9d1">t</div><div class="t" style="left:1318.6px;top:621.97px;width:10px;text-align:center;font-family:'Liberation Serif', serif;font-size:19.5px;color:#d9d9d1">/</div><div class="t" style="left:1328.6px;top:621.97px;width:10px;text-align:center;font-family:'Liberation Serif', serif;font-size:19.5px;color:#d9d9d1">c</div><div class="t" style="left:1338.6px;top:621.97px;width:10px;text-align:center;font-family:'Liberation Serif', serif;font-size:19.5px;color:#d9d9d1">o</div><div class="t" style="left:1348.6px;top:621.97px;width:10px;text-align:center;font-family:'Liberation Serif', serif;font-size:19.5px;color:#d9d9d1">d</div><div class="t" style="left:1358.6px;top:621.97px;width:10px;text-align:center;font-family:'Liberation Serif', serif;font-size:19.5px;color:#d9d9d1">e</div><div class="t" style="left:1368.6px;top:621.97px;width:10px;text-align:center;font-family:'Liberation Serif', serif;font-size:19.5px;color:#d9d9d1">_</div><div class="t" style="left:1378.6px;top:621.97px;width:10px;text-align:center;font-family:'Liberation Serif', serif;font-size:19.5px;color:#d9d9d1">s</div><div class="t" style="left:1388.6px;top:621.97px;width:10px;text-align:center;font-family:'Liberation Serif', serif;font-size:19.5px;color:#d9d9d1">t</div><div class="t" style="left:1398.6px;top:621.97px;width:10px;text-align:center;font-family:'Liberation Serif', serif;font-size:19.5px;color:#d9d9d1">y</div><div class="t" style="left:1408.6px;top:621.97px;width:10px;text-align:center;font-family:'Liberation Serif', serif;font-size:19.5px;color:#d9d9d1">l</div><div class="t" style="left:1418.6px;top:621.97px;width:10px;text-align:center;font-family:'Liberation Serif', serif;font-size:19.5px;color:#d9d9d1">e</div></body></html>
